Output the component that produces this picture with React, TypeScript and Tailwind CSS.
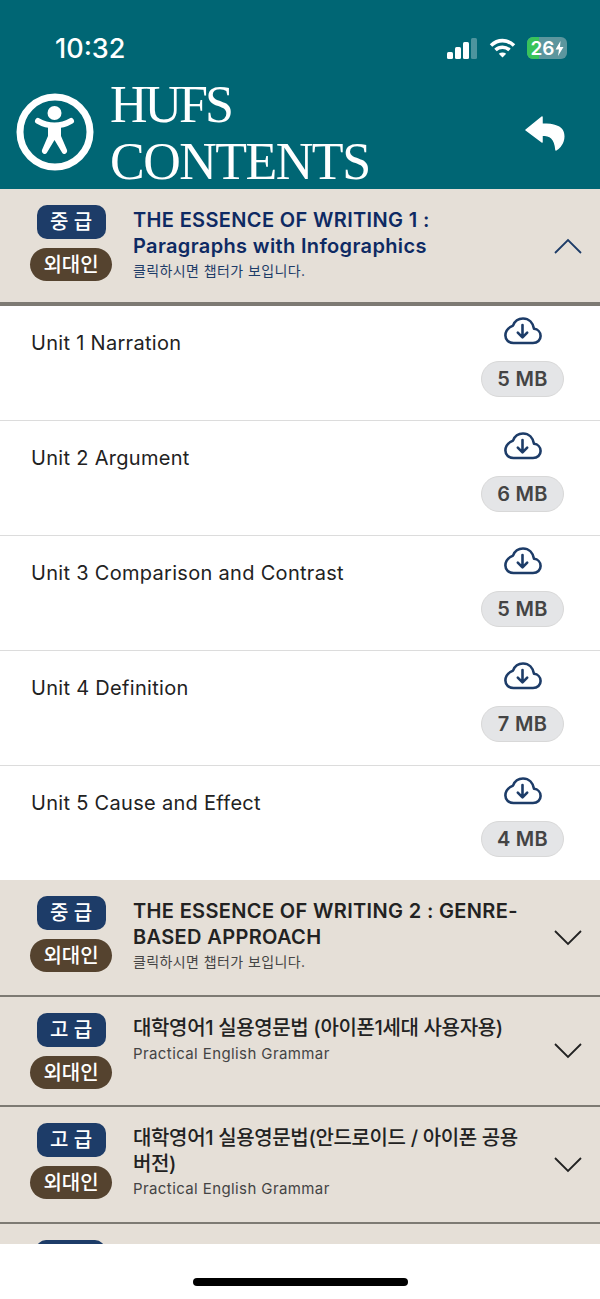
import React from "react";

const UNITS = [
  { title: "Unit 1 Narration", size: "5 MB" },
  { title: "Unit 2 Argument", size: "6 MB" },
  { title: "Unit 3 Comparison and Contrast", size: "5 MB" },
  { title: "Unit 4 Definition", size: "7 MB" },
  { title: "Unit 5 Cause and Effect", size: "4 MB" },
];

function Badges({ level }: { level: string }) {
  return (
    <div className="flex w-[82px] shrink-0 flex-col items-center gap-[9px]">
      <div className="flex h-[34px] w-[69px] items-center justify-center rounded-[10px] bg-[#1d3c68] text-[20px] font-medium text-white">
        {level}
      </div>
      <div className="flex h-[33px] w-[82px] items-center justify-center rounded-full bg-[#55432f] text-[20px] font-medium text-white">
        외대인
      </div>
    </div>
  );
}

function Chevron({ up }: { up?: boolean }) {
  return (
    <svg width="28" height="16" viewBox="0 0 28 16" fill="none" stroke={up ? "#1d3c68" : "#222222"} strokeWidth="1.8" className="shrink-0 self-center">
      <polyline points={up ? "1,15 14,2 27,15" : "1,1 14,14 27,1"} />
    </svg>
  );
}

function CloudIcon() {
  return (
    <svg width="38" height="28" viewBox="0 0 38 28" fill="none" stroke="#1d3c68" strokeWidth="2.6" strokeLinecap="round" strokeLinejoin="round">
      <path d="M9.5 26 H29 C33.5 26 36.6 23 36.6 19 C36.6 15 33.6 12.2 30 11.8 C29 6 25 1.5 19 1.5 C14.2 1.5 10.6 4.4 9 8.6 C4.6 10.4 1.4 14 1.4 18.6 C1.4 23 5 26 9.5 26 Z" />
      <path d="M18.5 8 V20 M13.8 15.6 L18.5 20.4 L23.2 15.6" />
    </svg>
  );
}

function Accordion({
  level,
  title,
  sub,
  open,
  className,
  titleClass,
  subClass,
}: {
  level: string;
  title: React.ReactNode;
  sub: string;
  open?: boolean;
  className: string;
  titleClass: string;
  subClass: string;
}) {
  return (
    <div className={`flex items-start bg-[#e5dfd7] py-[16px] pl-[30px] pr-[18px] ${className}`}>
      <Badges level={level} />
      <div className="ml-[21px] min-w-0 flex-1 break-keep pt-[2px]">
        <div className={`text-[20px] leading-[26px] ${titleClass}`}>{title}</div>
        <div className={`leading-[20px] ${subClass}`}>{sub}</div>
      </div>
      <Chevron up={open} />
    </div>
  );
}

function UnitRow({ title, size, last }: { title: string; size: string; last?: boolean }) {
  return (
    <div className={`flex justify-between pl-[31px] pr-[36px] ${last ? "h-[114px]" : "h-[115px] border-b border-[#dcdcdc]"}`}>
      <div className="pt-[23px] text-[20px] leading-[28px] tracking-[0.3px] text-[#222222]">{title}</div>
      <div className="flex w-[83px] flex-col items-center pt-[11px]">
        <CloudIcon />
        <div className="mt-[16px] flex h-[36px] w-full items-center justify-center rounded-full border border-[#d8d8d8] bg-[#e4e5e7] text-[20px] font-semibold tracking-[0.3px] text-[#444444]">
          {size}
        </div>
      </div>
    </div>
  );
}

export default function App() {
  return (
    <div className="flex h-[1299px] w-[600px] flex-col overflow-hidden bg-white font-['Inter','Noto_Sans_CJK_KR',sans-serif]">
      <header className="h-[189px] shrink-0 bg-[#006674] text-white">
        <div className="flex h-[76px] items-center justify-between pl-[55px] pr-[33px] pt-[20px]">
          <span className="text-[27px] font-medium leading-none">10:32</span>
          <div className="flex items-center gap-[11px]">
            <svg width="31" height="21" viewBox="0 0 31 21" fill="white">
              <rect x="0" y="14" width="6" height="7" rx="1.5" />
              <rect x="8" y="9" width="6" height="12" rx="1.5" />
              <rect x="16" y="4" width="6" height="17" rx="1.5" />
              <rect x="24" y="0" width="6" height="21" rx="1.5" opacity="0.3" />
            </svg>
            <svg width="27" height="20" viewBox="0 0 27 20" fill="none" stroke="white" strokeWidth="3.6">
              <path d="M2 7.5 C9 1 18 1 25 7.5" />
              <path d="M6.5 12 C10.5 8.4 16.5 8.4 20.5 12" />
              <path d="M13.5 19.5 L9.8 15.8 C12 14 15 14 17.2 15.8 Z" fill="white" stroke="none" />
            </svg>
            <div className="relative flex h-[22px] w-[40px] items-center justify-center overflow-hidden rounded-[6px] bg-[#5c969e] text-[19px] font-semibold leading-none">
              <div className="absolute inset-y-0 left-0 w-[12px] bg-[#39c35a]" />
              <span className="relative">26</span>
              <svg width="9" height="15" viewBox="0 0 9 15" fill="white" className="relative">
                <path d="M5.5 0 L0.5 8.5 H4 L3 15 L8.5 6 H5 Z" />
              </svg>
            </div>
          </div>
        </div>
        <div className="flex items-center pl-[16px] pr-[35px]">
          <svg width="78" height="78" viewBox="0 0 78 78" className="-mt-[2px] shrink-0">
            <circle cx="39" cy="39" r="35" fill="none" stroke="white" strokeWidth="7" />
            <circle cx="38.5" cy="20" r="7" fill="white" />
            <path
              d="M22 28 C27 31 33 32.5 38.5 32.5 C44 32.5 50 31 55 28"
              fill="none"
              stroke="white"
              strokeWidth="6"
              strokeLinecap="round"
            />
            <path d="M32 32 H45 V43 L51 57 C52 60.5 47.5 62.5 46 59.5 L38.5 47 L31 59.5 C29.5 62.5 25 60.5 26 57 L32 43 Z" fill="white" />
          </svg>
          <div className="ml-[16px] flex-1 font-['Liberation_Serif',serif] text-[52px] leading-[57px] tracking-[-1.5px]">
            <span className="tracking-[-3px]">HUFS</span>
            <br />
            CONTENTS
          </div>
          <svg width="40" height="35" viewBox="0 0 40 35" fill="white" className="shrink-0">
            <path d="M17 1 L1 14 L17 26 V19 C25 19 30 22 31 34 C38 29 40 22 38 16 C36 10 28 8 17 8 Z" strokeLinejoin="round" stroke="white" strokeWidth="1.5" />
          </svg>
        </div>
      </header>

      <main className="h-[1055px] shrink-0 overflow-hidden">
        <Accordion
          open
          level="중 급"
          title={
            <>
              THE ESSENCE OF WRITING 1 :
              <br />
              Paragraphs with Infographics
            </>
          }
          sub="클릭하시면 챕터가 보입니다."
          className="h-[117px] border-b-[4px] border-[#7d7a73]"
          titleClass="font-semibold tracking-[0.35px] text-[#0e2a63]"
          subClass="mt-[2px] text-[14px] tracking-[0.4px] text-[#1d3c68]"
        />
        {UNITS.map((unit, i) => (
          <UnitRow key={unit.title} title={unit.title} size={unit.size} last={i === UNITS.length - 1} />
        ))}
        <Accordion
          level="중 급"
          title="THE ESSENCE OF WRITING 2 : GENRE-BASED APPROACH"
          sub="클릭하시면 챕터가 보입니다."
          className="h-[117px] border-b-[2px] border-[#7d7a73]"
          titleClass="font-semibold tracking-[0.35px] text-[#222222]"
          subClass="mt-[2px] text-[14px] tracking-[0.4px] text-[#444444]"
        />
        <Accordion
          level="고 급"
          title="대학영어1 실용영문법 (아이폰1세대 사용자용)"
          sub="Practical English Grammar"
          className="h-[110px] border-b-[2px] border-[#7d7a73]"
          titleClass="font-medium tracking-[-0.35px] text-[#222222]"
          subClass="mt-[3px] text-[15px] tracking-[0.4px] text-[#444444]"
        />
        <Accordion
          level="고 급"
          title="대학영어1 실용영문법(안드로이드 / 아이폰 공용 버전)"
          sub="Practical English Grammar"
          className="h-[117px] border-b-[2px] border-[#7d7a73]"
          titleClass="font-medium tracking-[-0.35px] text-[#222222]"
          subClass="mt-[2px] text-[15px] tracking-[0.4px] text-[#444444]"
        />
        <div className="h-[20px] overflow-hidden bg-[#e5dfd7] pl-[36px] pt-[16px]">
          <div className="h-[34px] w-[69px] rounded-[10px] bg-[#1d3c68]" />
        </div>
      </main>

      <footer className="flex flex-1 justify-center bg-white pt-[34px]">
        <div className="h-[8px] w-[215px] rounded-full bg-black" />
      </footer>
    </div>
  );
}
